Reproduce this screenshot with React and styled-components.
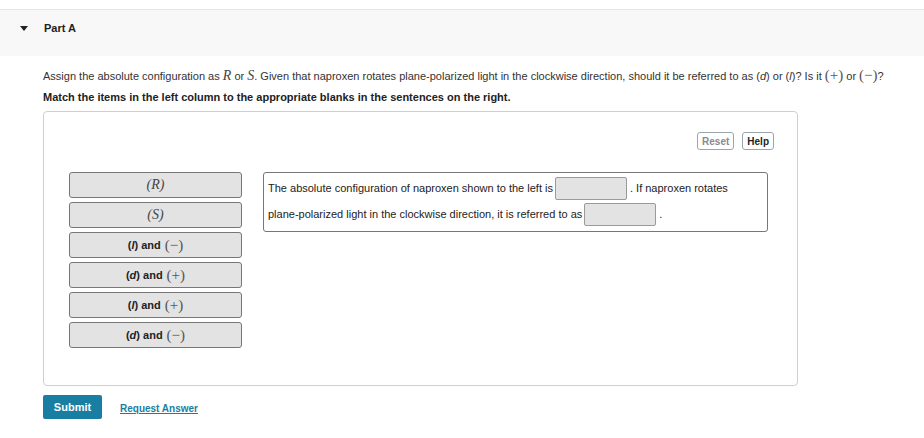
import React from "react";
import styled, { createGlobalStyle } from "styled-components";

const Global = createGlobalStyle`
  html, body { margin: 0; padding: 0; background: #fff; }
  body { font-family: "Liberation Sans", Arial, sans-serif; color: #222; }
`;

const Page = styled.div`
  width: 924px;
  padding-top: 9px;
`;

const Header = styled.div`
  height: 47px;
  border-top: 1px solid #e6e6e6;
  background: #f8f8f8;
  display: flex;
  align-items: center;
  padding-left: 20px;
  gap: 16px;
  box-sizing: border-box;
  padding-bottom: 10px;
`;

const Caret = styled.span`
  width: 0;
  height: 0;
  border-left: 4px solid transparent;
  border-right: 4px solid transparent;
  border-top: 5px solid #222;
`;

const Title = styled.span`
  font-size: 11px;
  font-weight: bold;
  color: #222;
`;

const Body = styled.div`
  padding: 11px 0 0 43px;
`;

const Instr = styled.p`
  margin: 0;
  height: 18px;
  font-size: 11px;
  line-height: 18px;
  color: #333;
  white-space: nowrap;
`;

const Bold = styled.p`
  margin: 3px 0 0;
  font-size: 11px;
  font-weight: bold;
  line-height: 18px;
  color: #222;
`;

const MathI = styled.span`
  font-family: "Liberation Serif", "Times New Roman", serif;
  font-style: italic;
  font-weight: normal;
  font-size: 14px;
  line-height: 1;
  color: #444;
`;

const MathSym = styled.span`
  font-family: "Liberation Serif", "Times New Roman", serif;
  font-weight: normal;
  font-size: 15px;
  line-height: 1;
  color: #555;
`;

const Em = styled.i``;

const Box = styled.div`
  margin-top: 5px;
  width: 755px;
  height: 275px;
  box-sizing: border-box;
  border: 1px solid #cfcfcf;
  border-radius: 4px;
  padding: 20px 23px 0 25px;
`;

const Tools = styled.div`
  display: flex;
  justify-content: flex-end;
  gap: 8px;
`;

const ToolBtn = styled.button`
  font-family: "Liberation Sans", Arial, sans-serif;
  font-size: 10px;
  font-weight: bold;
  height: 18px;
  padding: 0 4px;
  background: #fff;
  border: 1.5px solid #9aa6ad;
  border-radius: 3px;
  color: ${(p) => (p.$muted ? "#8a8a8a" : "#222")};
`;

const Main = styled.div`
  display: flex;
  gap: 21px;
  margin-top: 22px;
`;

const Items = styled.div`
  display: flex;
  flex-direction: column;
  gap: 4px;
`;

const Item = styled.div`
  width: 173px;
  height: 26px;
  box-sizing: border-box;
  border: 1px solid #777;
  border-radius: 3px;
  background: #e3e3e3;
  display: flex;
  align-items: center;
  justify-content: center;
  font-size: 11px;
  font-weight: bold;
  color: #222;
  gap: 4px;
`;

const Sentence = styled.div`
  width: 505px;
  height: 60px;
  box-sizing: border-box;
  border: 1px solid #777;
  border-radius: 3px;
  padding: 2px 4px 0;
  font-size: 11px;
  color: #222;
  line-height: 26px;
`;

const Blank = styled.span`
  display: inline-block;
  vertical-align: middle;
  width: 72px;
  height: 23px;
  box-sizing: border-box;
  border: 1px solid #9a9a9a;
  border-radius: 2px;
  background: #e3e3e3;
  margin: 0 3px 0 2px;
  position: relative;
  top: -1px;
`;

const Actions = styled.div`
  display: flex;
  align-items: center;
  gap: 18px;
  margin-top: 9px;
`;

const Submit = styled.button`
  font-family: "Liberation Sans", Arial, sans-serif;
  width: 59px;
  height: 24px;
  background: #1a7ea3;
  color: #fff;
  border: none;
  border-radius: 2px;
  font-size: 11px;
  font-weight: bold;
`;

const Link = styled.a`
  font-size: 10px;
  font-weight: bold;
  color: #1a7ea3;
  text-decoration: underline;
  margin-top: 2px;
`;

const items = [
  [<MathI key="r">(R)</MathI>],
  [<MathI key="s">(S)</MathI>],
  ["l", "−"],
  ["d", "+"],
  ["l", "+"],
  ["d", "−"],
];

export default function App() {
  return (
    <Page>
      <Global />
      <Header>
        <Caret />
        <Title>Part A</Title>
      </Header>
      <Body>
        <Instr>
          Assign the absolute configuration as <MathI>R</MathI> or <MathI>S</MathI>. Given that naproxen rotates
          plane-polarized light in the clockwise direction, should it be referred to as (<Em>d</Em>) or (<Em>l</Em>)? Is it{" "}
          <MathSym>(+)</MathSym> or <MathSym>(−)</MathSym>?
        </Instr>
        <Bold>Match the items in the left column to the appropriate blanks in the sentences on the right.</Bold>
        <Box>
          <Tools>
            <ToolBtn $muted>Reset</ToolBtn>
            <ToolBtn>Help</ToolBtn>
          </Tools>
          <Main>
            <Items>
              {items.map((it, i) =>
                it.length === 1 ? (
                  <Item key={i}>{it[0]}</Item>
                ) : (
                  <Item key={i}>
                    <span>
                      (<Em>{it[0]}</Em>) and
                    </span>
                    <MathSym>({it[1]})</MathSym>
                  </Item>
                )
              )}
            </Items>
            <Sentence>
              The absolute configuration of naproxen shown to the left is<Blank />. If naproxen rotates
              <br />
              plane-polarized light in the clockwise direction, it is referred to as<Blank />.
            </Sentence>
          </Main>
        </Box>
        <Actions>
          <Submit>Submit</Submit>
          <Link>Request Answer</Link>
        </Actions>
      </Body>
    </Page>
  );
}
